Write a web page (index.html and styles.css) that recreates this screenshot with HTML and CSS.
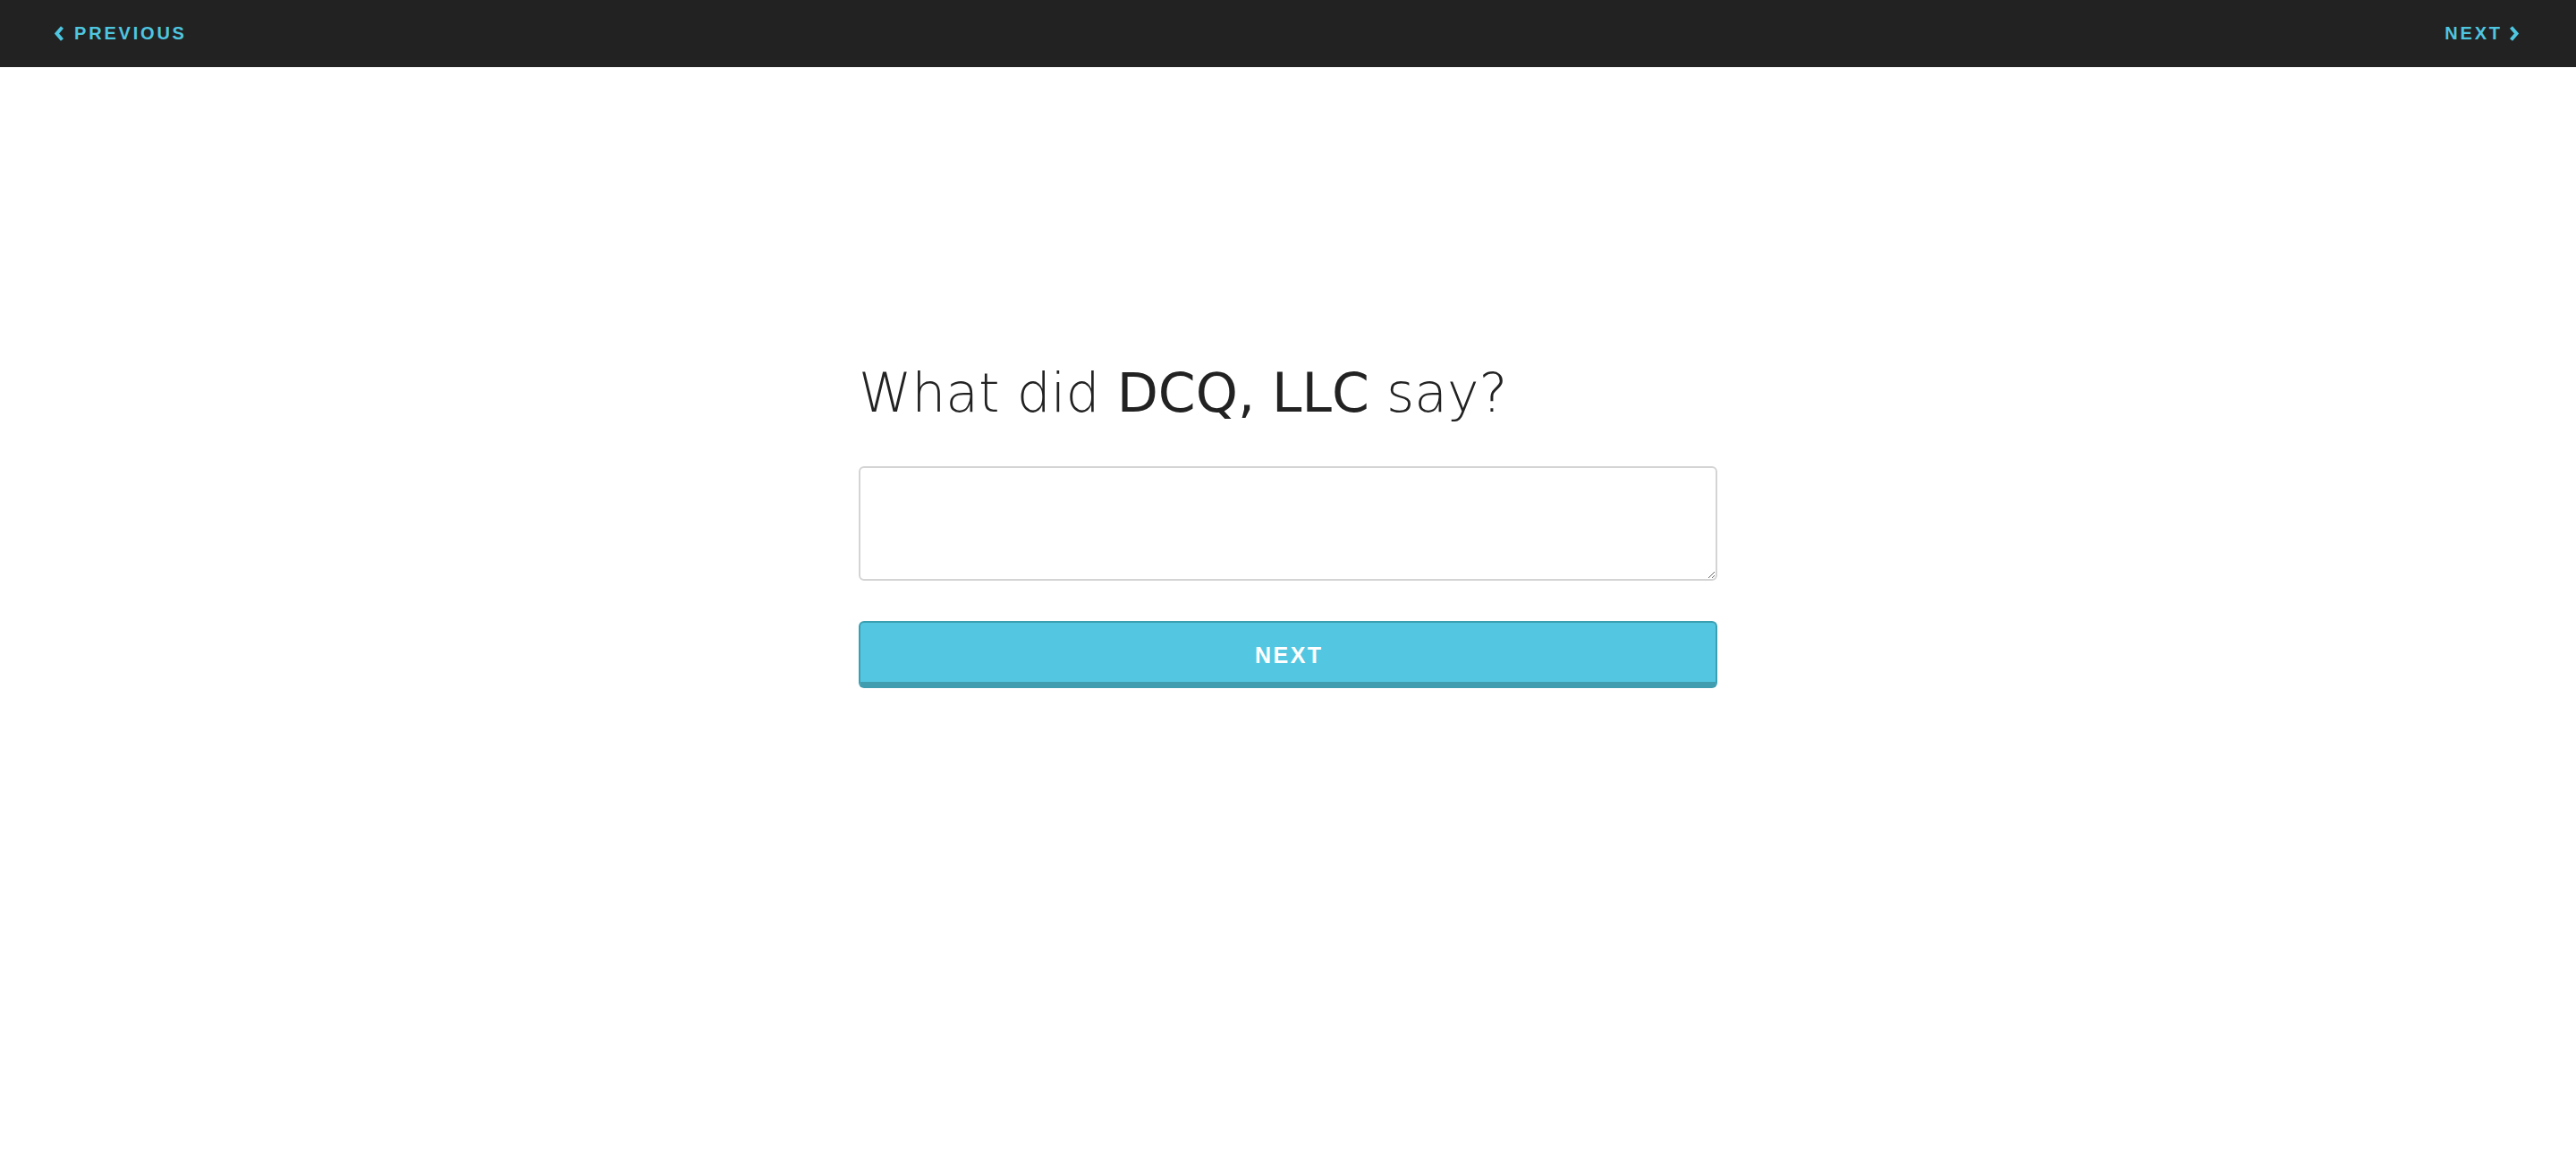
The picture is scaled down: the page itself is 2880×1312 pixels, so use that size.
FILE: index.html
```html
<!DOCTYPE html>
<html lang="en">
<head>
<meta charset="utf-8">
<title>What did DCQ, LLC say?</title>
<link rel="stylesheet" href="styles.css">
</head>
<body>
<header class="topbar">
  <a class="nav-link prev" href="#">
    <svg class="chev" width="12" height="17" viewBox="0 0 12 17" aria-hidden="true"><polyline points="9.5,1.5 3.5,8.5 9.5,15.5" fill="none" stroke="currentColor" stroke-width="4" stroke-linecap="butt" stroke-linejoin="miter"/></svg>
    <span>PREVIOUS</span>
  </a>
  <a class="nav-link next" href="#">
    <span>NEXT</span>
    <svg class="chev" width="12" height="17" viewBox="0 0 12 17" aria-hidden="true"><polyline points="2.5,1.5 8.5,8.5 2.5,15.5" fill="none" stroke="currentColor" stroke-width="4" stroke-linecap="butt" stroke-linejoin="miter"/></svg>
  </a>
</header>
<main class="page">
  <section class="question">
    <h1 class="title"><span class="light">What did </span><span class="strong">DCQ, LLC</span><span class="light"> say?</span></h1>
    <textarea class="answer"></textarea>
    <button class="btn-next" type="button">NEXT</button>
  </section>
</main>
</body>
</html>
```

FILE: styles.css
```css
html, body {
  margin: 0;
  padding: 0;
  background: #ffffff;
}

body {
  font-family: "Liberation Sans", Arial, sans-serif;
  color: #222222;
}

.topbar {
  height: 75px;
  background: #222222;
  display: flex;
  align-items: center;
  justify-content: space-between;
  padding: 0 63px 0 60px;
  box-sizing: border-box;
}

.nav-link {
  display: flex;
  align-items: center;
  gap: 11px;
  color: #4fc6e0;
  text-decoration: none;
  font-family: "Liberation Sans", Arial, sans-serif;
  font-weight: bold;
  font-size: 20px;
  letter-spacing: 2.8px;
  line-height: 1;
  padding-bottom: 1px;
}

.nav-link.next span {
  margin-right: -2.8px;
}

.nav-link.next {
  gap: 10px;
}

.chev {
  display: block;
}

.page {
  display: flex;
  justify-content: center;
}

.question {
  width: 960px;
  display: flex;
  flex-direction: column;
  padding-top: 326px;
}

.title {
  margin: 0;
  font-family: "DejaVu Sans", sans-serif;
  font-size: 60px;
  line-height: 76px;
  font-weight: 400;
  color: #222222;
}

.title .light {
  font-family: "DejaVu Sans", "DejaVu Sans ExtraLight", sans-serif;
  font-weight: 200;
}

.title .strong {
  font-weight: 400;
}

.answer {
  margin-top: 44px;
  height: 128px;
  width: 100%;
  box-sizing: border-box;
  border: 2px solid #d4d4d4;
  border-radius: 6px;
  background: #ffffff;
  resize: vertical;
  font-family: "DejaVu Sans", sans-serif;
  font-size: 20px;
  padding: 10px 14px;
  outline: none;
}

.btn-next {
  margin-top: 45px;
  height: 75px;
  width: 100%;
  box-sizing: border-box;
  background: #53c7e2;
  border: 2px solid #3a9fb1;
  border-bottom: 7px solid #409daf;
  border-radius: 6px;
  color: #ffffff;
  font-family: "Liberation Sans", Arial, sans-serif;
  font-weight: bold;
  font-size: 25px;
  letter-spacing: 2.5px;
  padding: 6px 0 0 2.5px;
  cursor: pointer;
}
```
